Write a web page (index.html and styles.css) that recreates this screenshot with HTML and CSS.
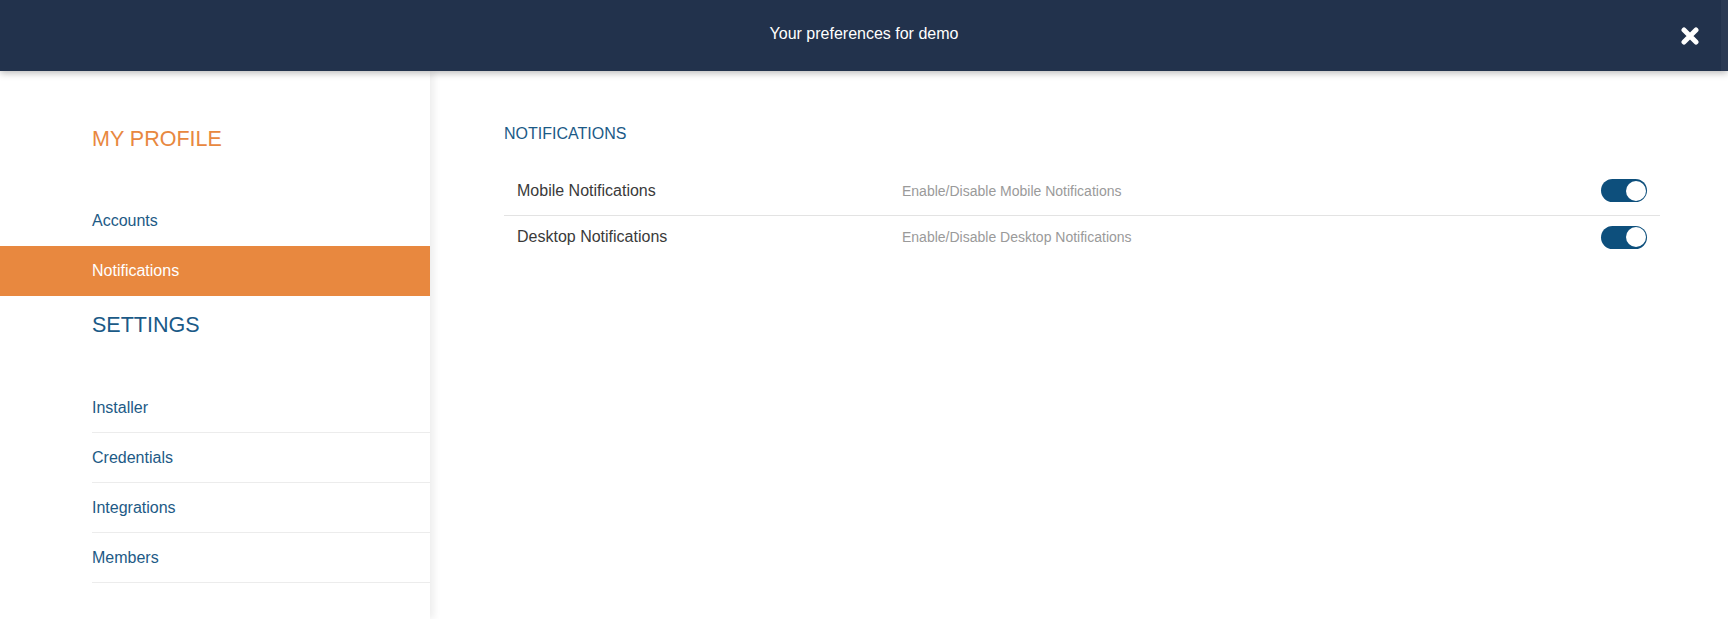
FILE: index.html
```html
<!DOCTYPE html>
<html lang="en">
<head>
<meta charset="utf-8">
<title>Preferences</title>
<link rel="stylesheet" href="styles.css">
</head>
<body>
<header class="topbar">
  <h1 class="title">Your preferences for demo</h1>
  <button class="close" aria-label="Close">
    <svg width="18" height="18" viewBox="0 0 18 18"><path d="M3 3 L15 15 M15 3 L3 15" stroke="#ffffff" stroke-width="5" stroke-linecap="round" fill="none"/></svg>
  </button>
</header>
<div class="layout">
  <aside class="sidebar">
    <h2 class="side-heading profile">MY PROFILE</h2>
    <ul class="side-list">
      <li class="side-item">Accounts</li>
      <li class="side-item active">Notifications</li>
    </ul>
    <h2 class="side-heading settings">SETTINGS</h2>
    <ul class="side-list bordered">
      <li class="side-item">Installer</li>
      <li class="side-item">Credentials</li>
      <li class="side-item">Integrations</li>
      <li class="side-item">Members</li>
    </ul>
  </aside>
  <main class="content">
    <h3 class="section-title">NOTIFICATIONS</h3>
    <div class="pref-list">
      <div class="pref-row">
        <span class="pref-name">Mobile Notifications</span>
        <span class="pref-desc">Enable/Disable Mobile Notifications</span>
        <span class="toggle on"><span class="knob"></span></span>
      </div>
      <div class="pref-row">
        <span class="pref-name">Desktop Notifications</span>
        <span class="pref-desc">Enable/Disable Desktop Notifications</span>
        <span class="toggle on"><span class="knob"></span></span>
      </div>
    </div>
  </main>
</div>
</body>
</html>
```
FILE: styles.css
```css
* { box-sizing: border-box; }
html, body { margin: 0; padding: 0; height: 100%; }
body {
  font-family: "Liberation Sans", Arial, Helvetica, sans-serif;
  background: #ffffff;
  overflow: hidden;
}
.topbar {
  position: relative;
  z-index: 2;
  height: 71px;
  background: #22324c;
  display: grid;
  grid-template-columns: 1fr auto 1fr;
  align-items: center;
  box-shadow: 0 2px 7px rgba(0, 0, 0, 0.28);
}
.topbar::after {
  content: "";
  position: absolute;
  top: 0;
  right: 0;
  width: 7px;
  height: 71px;
  background: #2b3a53;
}
.title {
  grid-column: 2;
  margin: 0;
  padding-bottom: 4px;
  font-size: 16px;
  line-height: 20px;
  font-weight: normal;
  color: #ffffff;
}
.close {
  grid-column: 3;
  justify-self: end;
  margin-right: 29px;
  margin-top: 1px;
  padding: 0;
  border: 0;
  background: none;
  width: 18px;
  height: 18px;
  display: flex;
}
.layout {
  display: flex;
  height: calc(100% - 71px);
}
.sidebar {
  position: relative;
  z-index: 1;
  width: 430px;
  flex: none;
  padding-top: 53px;
  background: #ffffff;
  box-shadow: 4px 0 7px rgba(0, 0, 0, 0.07);
}
.side-heading {
  margin: 0;
  padding-left: 92px;
  font-size: 21.5px;
  line-height: 30px;
  font-weight: normal;
}
.side-heading.profile { color: #e8883f; }
.side-heading.settings { color: #1b5a87; margin-top: 14px; }
.side-list {
  list-style: none;
  margin: 42px 0 0;
  padding: 0;
}
.side-list.bordered { margin-top: 43px; }
.side-item {
  height: 50px;
  line-height: 50px;
  padding-left: 92px;
  font-size: 16px;
  color: #1d5a86;
}
.side-item.active {
  background: #e8883f;
  color: #ffffff;
}
.bordered .side-item {
  margin-left: 92px;
  padding-left: 0;
  line-height: 49px;
  border-bottom: 1px solid #ececec;
}
.content {
  flex: 1;
  padding: 52.5px 68px 0 74px;
}
.section-title {
  margin: 0;
  font-size: 16px;
  line-height: 20px;
  font-weight: normal;
  color: #1b5a87;
}
.pref-list { margin-top: 24.5px; }
.pref-row {
  display: flex;
  align-items: center;
  height: 42px;
  padding: 0 13px;
}
.pref-row:first-child { border-bottom: 1px solid #e3e3e3; height: 48px; padding-bottom: 2px; }
.pref-name {
  width: 385px;
  flex: none;
  font-size: 16px;
  color: #3a3a3a;
}
.pref-desc {
  flex: 1;
  font-size: 14px;
  color: #9a9a9a;
}
.toggle {
  position: relative;
  width: 46px;
  height: 23px;
  border-radius: 12px;
  background: #0d4f7c;
  flex: none;
}
.knob {
  position: absolute;
  top: 1.5px;
  right: 1.5px;
  width: 20px;
  height: 20px;
  border-radius: 50%;
  background: #ffffff;
}
```
